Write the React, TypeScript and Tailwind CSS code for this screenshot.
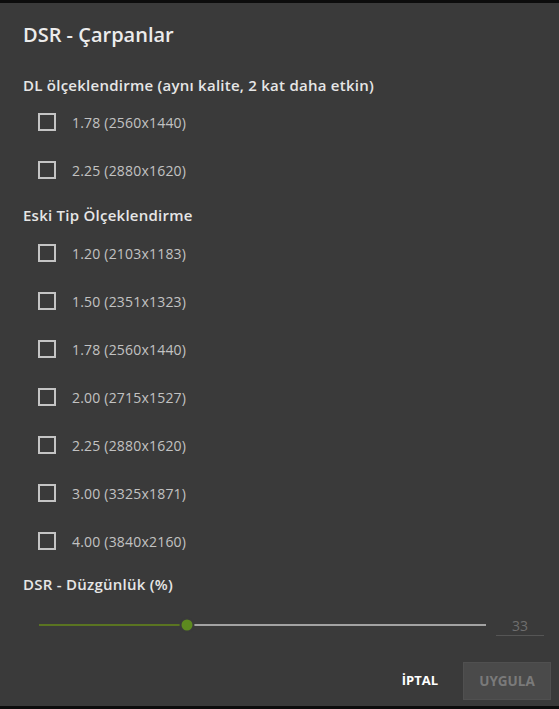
import React from "react";

const font = { fontFamily: '"Open Sans", "Liberation Sans", sans-serif' };

function Row({ label }: { label: string }) {
  return (
    <div className="flex h-[48px] items-center pl-[38px]">
      <div className="h-[18px] w-[18px] border-2 border-[#c4c4c4]" />
      <span className="ml-[16px] text-[14px] tracking-[0.2px] text-[#c2c2c2]">{label}</span>
    </div>
  );
}

export default function App() {
  const dl = ["1.78 (2560x1440)", "2.25 (2880x1620)"];
  const legacy = [
    "1.20 (2103x1183)",
    "1.50 (2351x1323)",
    "1.78 (2560x1440)",
    "2.00 (2715x1527)",
    "2.25 (2880x1620)",
    "3.00 (3325x1871)",
    "4.00 (3840x2160)",
  ];
  return (
    <div className="flex h-[709px] w-[559px] flex-col bg-black" style={font}>
      <div className="h-[3px] bg-[#0c0c0c]" />
      <div className="flex flex-1 flex-col bg-[#3a3a3a]">
        <div className="mt-[12px] flex h-[40px] items-center pl-[23px] text-[20px] font-semibold text-[#ececec]">
          DSR - Çarpanlar
        </div>
        <div className="mt-[18px] flex h-[24px] items-center pl-[23px] text-[15px] font-semibold tracking-[0.25px] text-[#e6e6e6]">
          DL ölçeklendirme (aynı kalite, 2 kat daha etkin)
        </div>
        <div className="mt-[1px]">
          {dl.map((l) => (
            <Row key={l} label={l} />
          ))}
        </div>
        <div className="mt-[9px] flex h-[24px] items-center pl-[23px] text-[15px] font-semibold tracking-[0.25px] text-[#e6e6e6]">
          Eski Tip Ölçeklendirme
        </div>
        <div className="mt-[2px]">
          {legacy.map((l) => (
            <Row key={l} label={l} />
          ))}
        </div>
        <div className="mt-[7px] flex h-[24px] items-center pl-[23px] text-[15px] font-semibold tracking-[0.25px] text-[#e6e6e6]">
          DSR - Düzgünlük (%)
        </div>
        <div className="mt-[17px] flex h-[24px] items-center pl-[39px] pr-[15px]">
          <div className="relative flex h-[2px] flex-1 items-center">
            <div className="h-[2px] w-[33%] bg-[#5a7421]" />
            <div className="h-[2px] flex-1 bg-[#a3a3a3]" />
            <div className="absolute left-[33%] top-1/2 h-[11px] w-[11px] -translate-x-1/2 -translate-y-1/2 rounded-full bg-[#5d8a1f] ring-2 ring-[#3a3a3a]" />
          </div>
          <div className="ml-[10px] flex h-[22px] w-[48px] items-center justify-center border-b border-[#555555] pt-[2px] text-[14px] text-[#6e6e6e]">
            33
          </div>
        </div>
        <div className="mt-[25px] flex items-center justify-end pr-[8px]">
          <span className="mr-[25px] text-[13px] font-bold text-white">İPTAL</span>
          <div className="flex h-[38px] w-[88px] items-center justify-center border border-[#505050] bg-[#4a4a4a] text-[13.5px] font-bold text-[#7a7a7a]">
            UYGULA
          </div>
        </div>
        <div className="flex-1" />
      </div>
      <div className="h-[3px] bg-[#0c0c0c]" />
    </div>
  );
}
